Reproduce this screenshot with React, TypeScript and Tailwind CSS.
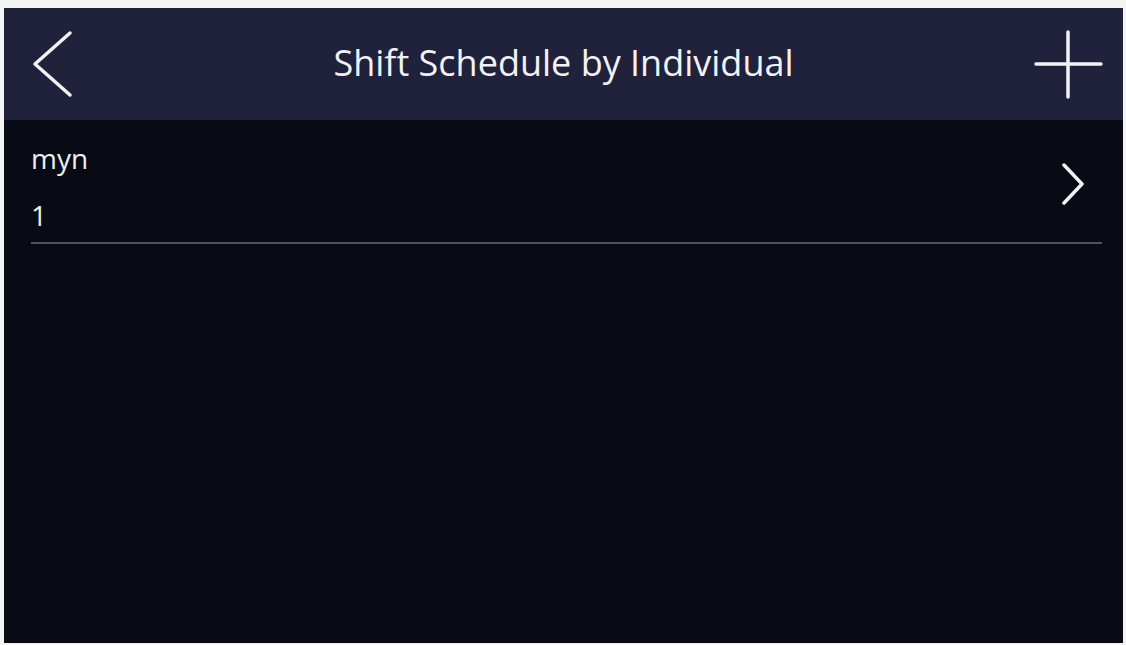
export default function App() {
  return (
    <div className="min-h-screen bg-[#f4f4f4] pt-[8px] pl-[4px] pr-[3px] pb-[2px]" style={{ fontFamily: '"Open Sans", "Noto Sans", sans-serif' }}>
      <div className="flex h-[635px] flex-col bg-[#080a14]">
        {/* header */}
        <header className="grid h-[112px] grid-cols-[100px_1fr_100px] items-center bg-[#20213a]">
          <svg width="100" height="112" viewBox="0 0 100 112" fill="none">
            <path d="M66 25 L31 56 L66 87" stroke="#f2f2f6" strokeWidth="3.5" strokeLinecap="round" strokeLinejoin="round" />
          </svg>
          <h1 className="mb-[2px] text-center text-[36px] leading-none text-[#f2f2f6]">Shift Schedule by Individual</h1>
          <svg width="100" height="112" viewBox="0 0 100 112" fill="none">
            <path d="M45 24 V89 M13 56 H78" stroke="#f2f2f6" strokeWidth="3.5" strokeLinecap="round" />
          </svg>
        </header>

        {/* list */}
        <div className="ml-[27px] mr-[21px] mt-[22px] flex items-center justify-between border-b-2 border-[#50525c] pb-[11px]">
          <div className="text-[28px] leading-[32px] text-[#eceef2]">
            <div>myn</div>
            <div className="mt-[25px]">1</div>
          </div>
          <svg width="24" height="42" viewBox="0 0 24 42" fill="none" className="mr-[17px] mb-[6px]">
            <path d="M3 2 L21 21 L3 40" stroke="#f2f2f6" strokeWidth="3.5" strokeLinecap="round" strokeLinejoin="round" />
          </svg>
        </div>
      </div>
    </div>
  );
}
